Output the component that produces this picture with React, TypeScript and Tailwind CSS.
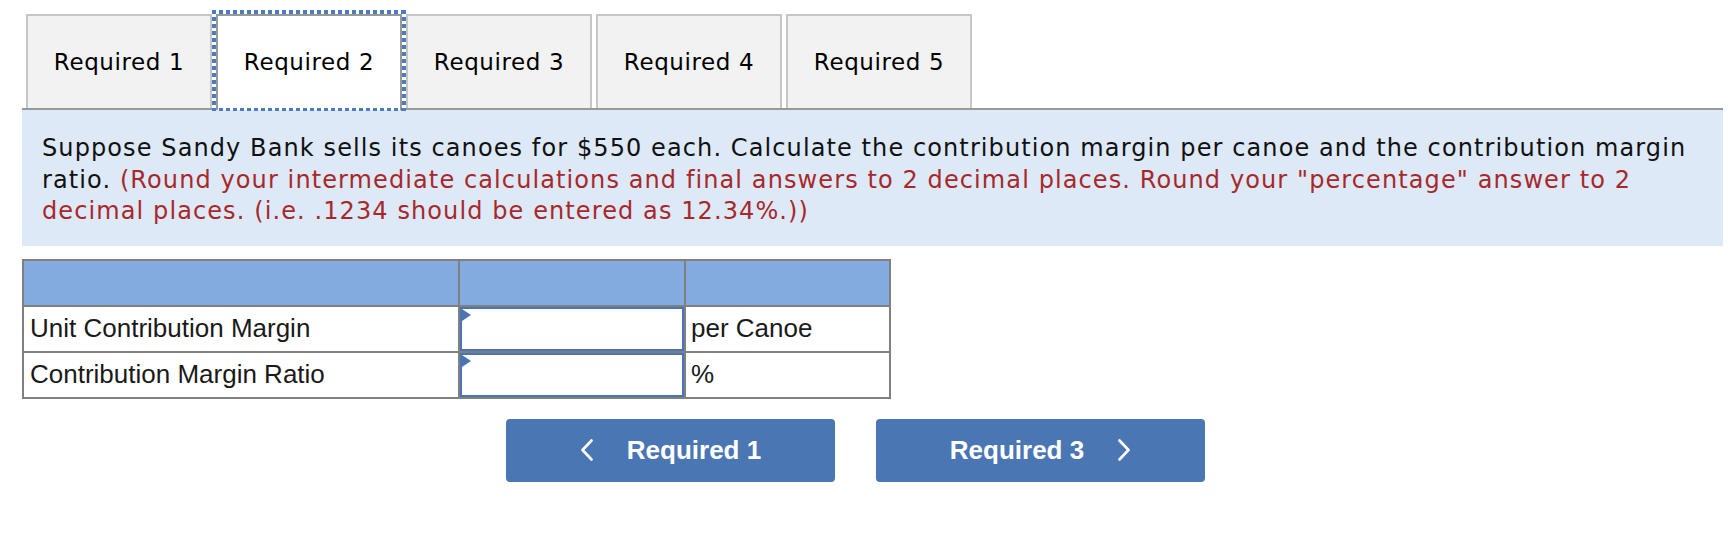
import React from "react";

const tabs = ["Required 1", "Required 2", "Required 3", "Required 4", "Required 5"];

function Chevron({ dir }: { dir: "left" | "right" }) {
  return (
    <svg width="14" height="22" viewBox="0 0 14 22" fill="none" className="shrink-0">
      {dir === "left" ? (
        <polyline points="11.5,1.5 2.5,11 11.5,20.5" stroke="white" strokeWidth="2.6" strokeLinecap="round" strokeLinejoin="round" />
      ) : (
        <polyline points="2.5,1.5 11.5,11 2.5,20.5" stroke="white" strokeWidth="2.6" strokeLinecap="round" strokeLinejoin="round" />
      )}
    </svg>
  );
}

function InputCell() {
  return (
    <div className="relative bg-white border-2 border-[#4a75b5]">
      <svg width="10" height="12" viewBox="0 0 10 12" className="absolute left-0 top-0">
        <polygon points="0,0 9,6 0,12" fill="#4a75b5" />
      </svg>
    </div>
  );
}

export default function App() {
  return (
    <div className="w-[1730px] h-[558px] bg-white pt-[14px] overflow-hidden">
      <div className="ml-[22px] w-[1701px]">
        {/* Tabs */}
        <div className="flex gap-[4px] pl-[4px] border-b-2 border-[#999999] items-start h-[96px]">
          {tabs.map((t, i) =>
            i === 1 ? (
              <div
                key={t}
                className="relative w-[186px] h-[96px] border-2 border-b-0 border-[#999999] bg-white flex items-center justify-center pb-[2px] font-['DejaVu_Sans',sans-serif] text-[23px] tracking-[0.6px] text-black"
              >
                {t}
                <div className="absolute -left-[6px] -right-[6px] -top-[6px] -bottom-[1px] pointer-events-none">
                  <div className="absolute left-0 right-0 top-0 h-[4px] bg-[repeating-linear-gradient(90deg,#4b7bc0_0px,#4b7bc0_4px,transparent_4px,transparent_7px)]" />
                  <div className="absolute left-0 right-0 bottom-0 h-[3px] bg-[repeating-linear-gradient(90deg,#4b7bc0_0px,#4b7bc0_4px,transparent_4px,transparent_7px)]" />
                  <div className="absolute top-0 bottom-0 left-0 w-[4px] bg-[repeating-linear-gradient(180deg,#4b7bc0_0px,#4b7bc0_4px,transparent_4px,transparent_7px)]" />
                  <div className="absolute top-0 bottom-0 right-0 w-[4px] bg-[repeating-linear-gradient(180deg,#4b7bc0_0px,#4b7bc0_4px,transparent_4px,transparent_7px)]" />
                </div>
              </div>
            ) : (
              <div
                key={t}
                className="w-[186px] h-[94px] border-2 border-b-0 border-[#c6c6c6] bg-[#f2f2f2] flex items-center justify-center font-['DejaVu_Sans',sans-serif] text-[23px] tracking-[0.6px] text-black"
              >
                {t}
              </div>
            )
          )}
        </div>

        {/* Question panel */}
        <div className="bg-[#dde9f7] pl-[20px] pr-[10px] pt-[23px] pb-[18px] font-['DejaVu_Sans',sans-serif] text-[24px] tracking-[1.1px] leading-[31.5px] text-[#111111] whitespace-nowrap">
          Suppose Sandy Bank sells its canoes for $550 each. Calculate the contribution margin per canoe and the contribution margin
          <br />
          ratio.{" "}
          <span className="text-[#a8282a]">
            (Round your intermediate calculations and final answers to 2 decimal places. Round your "percentage" answer to 2
            <br />
            decimal places. (i.e. .1234 should be entered as 12.34%.))
          </span>
        </div>

        {/* Table */}
        <div className="mt-[13px] w-[869px] border-2 border-[#808080] bg-[#808080] grid grid-cols-[434px_224px_203px] grid-rows-[44px_44px_44px] gap-[2px] font-['Liberation_Sans',Arial,sans-serif] text-[26px] text-[#1a1a1a]">
          <div className="bg-[#83abdf]" />
          <div className="bg-[#83abdf]" />
          <div className="bg-[#83abdf]" />

          <div className="bg-white flex items-center pl-[6px]">Unit Contribution Margin</div>
          <InputCell />
          <div className="bg-white flex items-center pl-[5px]">per Canoe</div>

          <div className="bg-white flex items-center pl-[6px]">Contribution Margin Ratio</div>
          <InputCell />
          <div className="bg-white flex items-center pl-[5px]">%</div>
        </div>

        {/* Nav buttons */}
        <div className="mt-[20px] flex gap-[41px] pl-[484px]">
          <button className="w-[329px] h-[63px] rounded-[4px] bg-[#4a76b4] flex items-center justify-center gap-[33px] text-white font-bold text-[26px] font-['Liberation_Sans',Arial,sans-serif]">
            <Chevron dir="left" />
            <span>Required 1</span>
          </button>
          <button className="w-[329px] h-[63px] rounded-[4px] bg-[#4a76b4] flex items-center justify-center gap-[33px] text-white font-bold text-[26px] font-['Liberation_Sans',Arial,sans-serif]">
            <span>Required 3</span>
            <Chevron dir="right" />
          </button>
        </div>
      </div>
    </div>
  );
}
